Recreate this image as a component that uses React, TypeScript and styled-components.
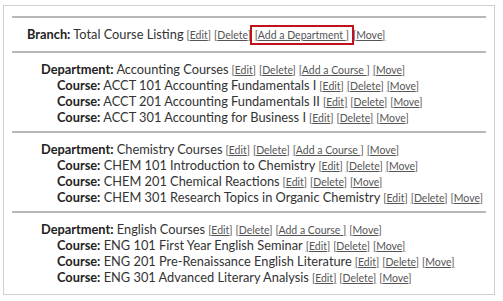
import React from "react";
import styled, { createGlobalStyle } from "styled-components";

const Global = createGlobalStyle`
  html, body { margin: 0; padding: 0; background: #fff; }
  body { font-family: Lato, "Open Sans", sans-serif; color: #333; }
`;

const Frame = styled.div`
  margin: 5px 0 0 3px;
  width: 492px;
  height: 290px;
  box-sizing: border-box;
  border: 1px solid #d0d0d0;
  padding: 10px 8px 0 8px;
`;

const Section = styled.div<{ $first?: boolean }>`
  border-top: 2px solid #b8b8b8;
  padding: ${(p) => (p.$first ? "8px 0 9px" : "8px 0 6px")};
`;

const Line = styled.div<{ $level: number }>`
  font-size: 12.8px;
  line-height: 16px;
  height: 16px;
  white-space: nowrap;
  padding-left: ${(p) => (p.$level === 0 ? 15 : p.$level === 1 ? 29 : 45)}px;
`;

const Label = styled.b`
  font-weight: 700;
  color: #222;
`;

const Action = styled.a<{ $boxed?: boolean }>`
  font-size: 10.5px;
  line-height: 11px;
  color: #555;
  text-decoration: underline;
  margin-left: 3px;
  ${(p) =>
    p.$boxed
      ? `outline: 2px solid #c0121b; outline-offset: 2px; padding: 0 1px;`
      : ""}
`;

type Row = { level: number; label: string; name: string; actions: string[]; boxed?: string };

const course = ["Edit", "Delete", "Move"];
const dept = ["Edit", "Delete", "Add a Course ", "Move"];

const sections: Row[][] = [
  [
    {
      level: 0,
      label: "Branch:",
      name: "Total Course Listing",
      actions: ["Edit", "Delete", "Add a Department ", "Move"],
      boxed: "Add a Department ",
    },
  ],
  [
    { level: 1, label: "Department:", name: "Accounting Courses", actions: dept },
    { level: 2, label: "Course:", name: "ACCT 101 Accounting Fundamentals I", actions: course },
    { level: 2, label: "Course:", name: "ACCT 201 Accounting Fundamentals II", actions: course },
    { level: 2, label: "Course:", name: "ACCT 301 Accounting for Business I", actions: course },
  ],
  [
    { level: 1, label: "Department:", name: "Chemistry Courses", actions: dept },
    { level: 2, label: "Course:", name: "CHEM 101 Introduction to Chemistry", actions: course },
    { level: 2, label: "Course:", name: "CHEM 201 Chemical Reactions", actions: course },
    { level: 2, label: "Course:", name: "CHEM 301 Research Topics in Organic Chemistry", actions: course },
  ],
  [
    { level: 1, label: "Department:", name: "English Courses", actions: dept },
    { level: 2, label: "Course:", name: "ENG 101 First Year English Seminar", actions: course },
    { level: 2, label: "Course:", name: "ENG 201 Pre-Renaissance English Literature", actions: course },
    { level: 2, label: "Course:", name: "ENG 301 Advanced Literary Analysis", actions: course },
  ],
];

export default function App() {
  return (
    <>
      <Global />
      <Frame>
        {sections.map((rows, i) => (
          <Section key={i} $first={i === 0}>
            {rows.map((r, j) => (
              <Line key={j} $level={r.level}>
                <Label>{r.label}</Label> {r.name}
                {r.actions.map((a) => (
                  <Action key={a} href="#" $boxed={r.boxed === a}>
                    [{a}]
                  </Action>
                ))}
              </Line>
            ))}
          </Section>
        ))}
      </Frame>
    </>
  );
}
